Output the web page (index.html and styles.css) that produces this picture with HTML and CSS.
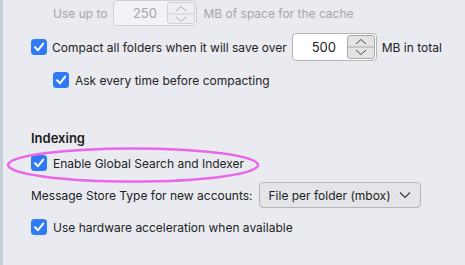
FILE: index.html
```html
<!DOCTYPE html>
<html lang="en">
<head>
  <meta charset="UTF-8">
  <title>Settings - Disk Space</title>
<link rel="stylesheet" href="styles.css">
</head>
<body>
<div class="pane">

  <!-- Cache size (disabled) -->
  <div class="row row-cache is-disabled">
    <span class="label">Use up to</span>
    <div class="number-box is-disabled">
      <span class="number-value">250</span>
      <span class="spinner">
        <svg viewBox="0 0 26 22" width="26" height="22">
          <path d="M8 8 L13 3.5 L18 8" />
          <line x1="0" y1="11" x2="26" y2="11" class="divider" />
          <path d="M8 14 L13 18.5 L18 14" />
        </svg>
      </span>
    </div>
    <span class="label">MB of space for the cache</span>
  </div>

  <!-- Compact folders -->
  <div class="row row-compact">
    <span class="check"><svg viewBox="0 0 16 16" width="16" height="16"><path d="M4 8.3 L7 11.2 L12.2 4.6" /></svg></span>
    <span class="label">Compact all folders when it will save over</span>
    <div class="number-box">
      <span class="number-value">500</span>
      <span class="spinner">
        <svg viewBox="0 0 26 22" width="26" height="22">
          <path d="M8 8 L13 3.5 L18 8" />
          <line x1="0" y1="11" x2="26" y2="11" class="divider" />
          <path d="M8 14 L13 18.5 L18 14" />
        </svg>
      </span>
    </div>
    <span class="label">MB in total</span>
  </div>

  <div class="row row-ask nested">
    <span class="check"><svg viewBox="0 0 16 16" width="16" height="16"><path d="M4 8.3 L7 11.2 L12.2 4.6" /></svg></span>
    <span class="label">Ask every time before compacting</span>
  </div>

  <!-- Indexing -->
  <h2 class="section-title">Indexing</h2>

  <div class="row row-enable">
    <span class="check"><svg viewBox="0 0 16 16" width="16" height="16"><path d="M4 8.3 L7 11.2 L12.2 4.6" /></svg></span>
    <span class="label">Enable Global Search and Indexer</span>
    <svg class="highlight" viewBox="0 0 256 38" width="256" height="38">
      <ellipse cx="128" cy="19" rx="125" ry="16.5" />
    </svg>
  </div>

  <div class="row row-store">
    <span class="label">Message Store Type for new accounts:</span>
    <div class="select-box">
      <span>File per folder (mbox)</span>
      <svg viewBox="0 0 12 8" width="12" height="8"><path d="M1 1.5 L6 6.5 L11 1.5" /></svg>
    </div>
  </div>

  <div class="row row-hw">
    <span class="check"><svg viewBox="0 0 16 16" width="16" height="16"><path d="M4 8.3 L7 11.2 L12.2 4.6" /></svg></span>
    <span class="label">Use hardware acceleration when available</span>
  </div>

</div>
</body>
</html>
```
FILE: styles.css
```css
/* Page */
body {
  margin: 0;
  background: #e9ebf0;
  font-family: 'Inter', 'Liberation Sans', sans-serif;
  font-size: 12px;
  color: #222;
  overflow: hidden;
}

.pane {
  min-height: 265px;
  border-left: 3px solid #c6cfd7;
  padding-left: 28px;
  box-sizing: border-box;
}

/* Rows */
.row {
  display: flex;
  align-items: center;
  gap: 6px;
  height: 20px;
  position: relative;
  white-space: nowrap;
}

.nested {
  padding-left: 22px;
}

.row-cache {
  height: 26px;
  padding-left: 22px;
}

.row-compact {
  height: 28px;
  margin-top: 7px;
  gap: 5px;
}

.row-ask {
  margin-top: 9px;
}

.row-enable {
  margin-top: 5px;
}

.row-store {
  height: 26px;
  margin-top: 9px;
  gap: 6px;
}

.row-hw {
  margin-top: 9px;
}

.is-disabled .label {
  color: #a4a6aa;
}

.section-title {
  margin: 38px 0 0;
  height: 20px;
  line-height: 20px;
  font-size: 13px;
  font-weight: 600;
  color: #1c1c1c;
}

/* Checkbox */
.check {
  width: 16px;
  height: 16px;
  border-radius: 3.5px;
  background: #2f7bf5;
  flex-shrink: 0;
  display: flex;
}

.check path {
  fill: none;
  stroke: #fff;
  stroke-width: 2;
  stroke-linecap: round;
  stroke-linejoin: round;
}

/* Number field with spinner */
.number-box {
  display: flex;
  align-items: center;
  justify-content: space-between;
  box-sizing: border-box;
  width: 85px;
  height: 28px;
  padding: 0 1px 0 8px;
  background: #fff;
  border: 1px solid #b5b5b8;
  border-radius: 4px;
}

.row-cache .number-box {
  height: 26px;
  width: 84px;
}

.number-value {
  flex: 1;
  text-align: center;
  color: #222;
  font-size: 13px;
}

.number-box.is-disabled {
  background: #f2f3f6;
  border-color: #cfd1d6;
}

.number-box.is-disabled .number-value {
  color: #a4a6aa;
}

.spinner {
  display: flex;
  box-sizing: border-box;
  width: 28px;
  height: 24px;
  border: 1px solid #a9a9ad;
  border-radius: 3px;
  background: #e3e3e6;
}

.row-cache .spinner {
  height: 22px;
  border-color: #d0d1d5;
  background: #eeeff2;
}

.spinner path {
  fill: none;
  stroke: #4a4a4d;
  stroke-width: 1;
}

.spinner .divider {
  stroke: #a9a9ad;
  stroke-width: 1;
}

.row-cache .spinner path {
  stroke: #a8aaae;
}

.row-cache .spinner .divider {
  stroke: #d0d1d5;
}

/* Select */
.select-box {
  display: flex;
  align-items: center;
  gap: 8px;
  box-sizing: border-box;
  height: 26px;
  padding: 0 9px 0 9px;
  background: #e4e5e8;
  border: 1px solid #b4b5b9;
  border-radius: 4px;
  color: #222;
}

.select-box svg {
  flex-shrink: 0;
}

.select-box path {
  fill: none;
  stroke: #3a3a3c;
  stroke-width: 1.2;
}

/* Hand-drawn highlight over the indexer row */
.highlight {
  position: absolute;
  left: -26px;
  top: -7px;
  pointer-events: none;
}

.highlight ellipse {
  fill: none;
  stroke: #ea66ea;
  stroke-width: 2.5;
}
```
